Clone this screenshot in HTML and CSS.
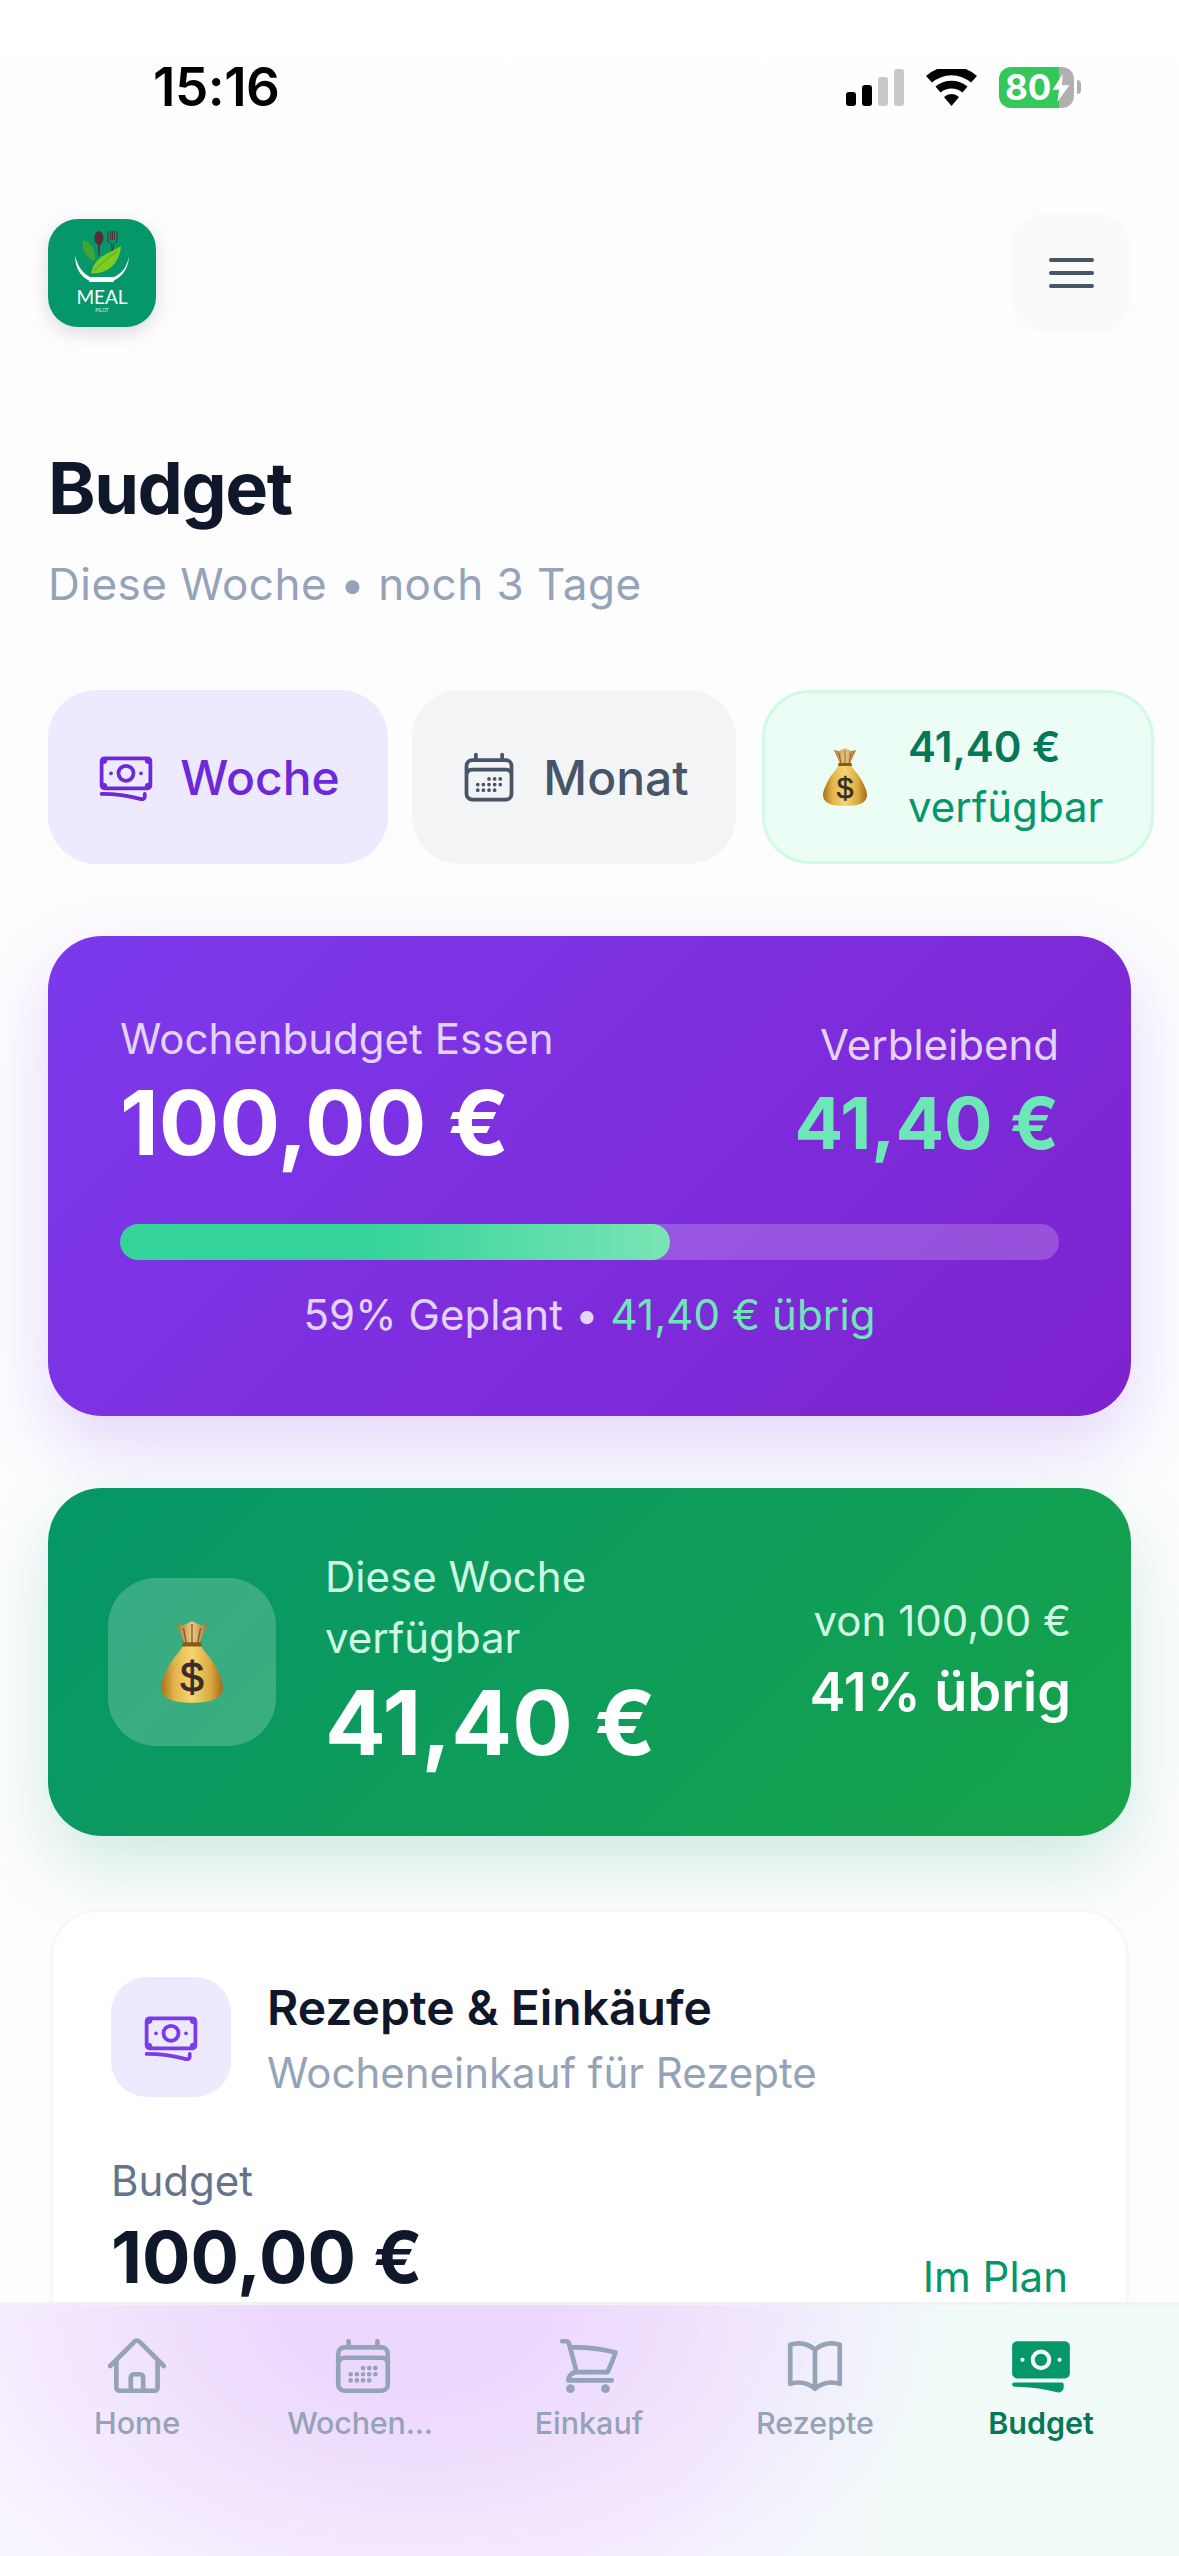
FILE: index.html
```html
<!DOCTYPE html>
<html lang="de">
<head>
    <meta charset="UTF-8">
    <meta name="viewport" content="width=device-width, initial-scale=1.0">
    <title>Budget</title>
    <link rel="stylesheet" href="styles.css">
</head>
<body>
    <svg class="defs" width="0" height="0">
        <defs>
            <linearGradient id="bagGold" x1="0" y1="0" x2="1" y2="0">
                <stop offset="0" stop-color="#a9701b"/>
                <stop offset="0.22" stop-color="#e3b44a"/>
                <stop offset="0.5" stop-color="#f6d673"/>
                <stop offset="0.8" stop-color="#dba840"/>
                <stop offset="1" stop-color="#a36a18"/>
            </linearGradient>
            <linearGradient id="bagTop" x1="0" y1="0" x2="1" y2="0">
                <stop offset="0" stop-color="#a9742a"/>
                <stop offset="0.5" stop-color="#efcb8c"/>
                <stop offset="1" stop-color="#a9742a"/>
            </linearGradient>
            <symbol id="bag" viewBox="0 0 44 58">
                <path d="M11 2l5 1 6-3 6 3 5-1-6 14h-10z" fill="url(#bagTop)"/>
                <path d="M16 5l2 11M22 2v14M28 5l-2 11" stroke="#8d5f22" stroke-width="1" fill="none"/>
                <path d="M16 17c-3 6-9 10-13 20-2 4-3 7-3 10 0 8 8 11 22 11s22-3 22-11c0-3-1-6-3-10-4-10-10-14-13-20z" fill="url(#bagGold)"/>
                <path d="M15.500 15h13l.5 3h-14z" fill="#8a5a1c"/>
                <text x="22" y="50" text-anchor="middle" class="bag-sign">$</text>
            </symbol>
            <symbol id="banknotes" viewBox="0 0 24 24">
                <path fill="none" stroke="currentColor" stroke-linecap="round" stroke-linejoin="round" d="M2.25 18.75a60.07 60.07 0 0 1 15.797 2.101c.727.198 1.453-.342 1.453-1.096V18.75M3.750 4.500v.75A.75.75 0 0 1 3 6h-.75m0 0v-.375c0-.621.504-1.125 1.125-1.125H20.250M2.250 6v9m18-10.500v.75c0 .414.336.75.75.75h.75m-1.500-1.500h.375c.621 0 1.125.504 1.125 1.125v9.750c0 .621-.504 1.125-1.125 1.125h-.375m1.500-1.500H21a.75.75 0 0 0-.75.75v.75m0 0H3.750m0 0h-.375a1.125 1.125 0 0 1-1.125-1.125V15m1.500 1.500v-.75A.75.75 0 0 0 3 15h-.75M15 10.500a3 3 0 1 1-6 0 3 3 0 0 1 6 0Zm3 0h.008v.008H18V10.500Zm-12 0h.008v.008H6V10.500Z"/>
            </symbol>
            <symbol id="calendar" viewBox="0 0 24 24">
                <path fill="none" stroke="currentColor" stroke-linecap="round" stroke-linejoin="round" d="M6.750 3v2.250M17.250 3v2.250M3 18.750V7.500a2.250 2.250 0 0 1 2.250-2.250h13.500A2.250 2.250 0 0 1 21 7.500v11.250m-18 0A2.250 2.250 0 0 0 5.250 21h13.500A2.250 2.250 0 0 0 21 18.750m-18 0v-7.500A2.250 2.250 0 0 1 5.250 9h13.500A2.250 2.250 0 0 1 21 11.250v7.500m-9-6h.008v.008H12v-.008ZM12 15h.008v.008H12V15Zm0 2.250h.008v.008H12v-.008ZM9.750 15h.008v.008H9.750V15Zm0 2.250h.008v.008H9.750v-.008ZM7.500 15h.008v.008H7.500V15Zm0 2.250h.008v.008H7.500v-.008Zm6.750-4.500h.008v.008h-.008v-.008Zm0 2.250h.008v.008h-.008V15Zm0 2.250h.008v.008h-.008v-.008Zm2.250-4.500h.008v.008H16.500v-.008Zm0 2.250h.008v.008H16.500V15Z"/>
            </symbol>
        </defs>
    </svg>

    <div class="status">
        <span class="time">15:16</span>
        <div class="status-icons">
            <div class="signal">
                <span class="bar bar-1"></span>
                <span class="bar bar-2"></span>
                <span class="bar bar-3"></span>
                <span class="bar bar-4"></span>
            </div>
            <svg class="wifi" viewBox="0 0 51 37">
                <path d="M25.500 37l-7.500-9a11 11 0 0 1 15 0z"/>
                <path d="M14.500 23.500l-5-6a25 25 0 0 1 32 0l-5 6a17.500 17.500 0 0 0-22 0z"/>
                <path d="M6 13.500L0 7a38 38 0 0 1 51 0l-6 6.500a30 30 0 0 0-39 0z"/>
            </svg>
            <div class="battery">
                <div class="battery-body">
                    <span class="battery-num">80</span>
                    <svg class="bolt" viewBox="0 0 18 30"><path d="M11 0L0 17h7l-2 13 13-18h-8z"/></svg>
                </div>
                <span class="battery-nub"></span>
            </div>
        </div>
    </div>

    <header class="top">
        <div class="logo">
            <svg viewBox="0 0 108 108" width="108" height="108">
                <path d="M51 12c3 0 4.500 4 4.500 7.500 0 3-2 5.500-3.500 6.500l-.5 11h-1l-.5-11c-1.500-1-3.500-3.500-3.500-6.500C46.500 16 48 12 51 12z" fill="#5a2a35"/>
                <path d="M60 12v9c0 2 2 3.500 3.500 4l.5 7h1l.5-7c1.500-.5 3.500-2 3.500-4v-9M62.700 12v9M66.300 12v9M64.500 12v9" fill="none" stroke="#5a2a35" stroke-width="1"/>
                <path d="M35 21c8 2 13 9 12 21-8-2-14-10-12-21z" fill="#3fa535"/>
                <path d="M73 27c-10 7-26 9-30 27 10 2 28-4 30-27z" fill="#7ccb1d"/>
                <path d="M46 52c6-7 14-13 23-20" stroke="#2f9e3a" stroke-width=".7" fill="none"/>
                <path d="M27 36c0 12 5 21 13 25h27c8-4 14-13 14-25-1 10-6 18-15 22H42c-8-4-13-12-15-22z" fill="#fff"/>
                <path d="M40 60h27l-1.500 3h-24z" fill="#fff"/>
                <text x="54" y="85" text-anchor="middle" class="logo-meal">MEAL</text>
                <text x="54" y="93" text-anchor="middle" class="logo-pilot">PILOT</text>
            </svg>
        </div>
        <button class="menu-btn" type="button">
            <span class="menu-line"></span>
            <span class="menu-line"></span>
            <span class="menu-line"></span>
        </button>
    </header>

    <main class="content">
        <h1 class="title">Budget</h1>
        <p class="subtitle">Diese Woche • noch 3 Tage</p>

        <div class="tabs">
            <div class="tab tab-active">
                <svg class="tab-icon"><use href="#banknotes"/></svg>
                <span>Woche</span>
            </div>
            <div class="tab tab-month">
                <svg class="tab-icon"><use href="#calendar"/></svg>
                <span>Monat</span>
            </div>
            <div class="tab-free">
                <svg class="bag-small"><use href="#bag"/></svg>
                <div>
                    <div class="free-amount">41,40 €</div>
                    <div class="free-label">verfügbar</div>
                </div>
            </div>
        </div>

        <section class="card-purple">
            <div class="purple-head">
                <div>
                    <div class="purple-label">Wochenbudget Essen</div>
                    <div class="purple-amount">100,00 €</div>
                </div>
                <div class="purple-right">
                    <div class="purple-label">Verbleibend</div>
                    <div class="purple-left-amount">41,40 €</div>
                </div>
            </div>
            <div class="progress">
                <div class="progress-fill" style="width: 58.6%"></div>
            </div>
            <p class="purple-caption">59% Geplant • <span class="mint">41,40 € übrig</span></p>
        </section>

        <section class="card-green">
            <div class="green-icon">
                <svg class="bag-large"><use href="#bag"/></svg>
            </div>
            <div>
                <div class="green-label">Diese Woche<br>verfügbar</div>
                <div class="green-amount">41,40 €</div>
            </div>
            <div class="green-right">
                <div class="green-of">von 100,00 €</div>
                <div class="green-percent">41% übrig</div>
            </div>
        </section>

        <section class="card-white">
            <div class="white-head">
                <div class="white-icon">
                    <svg class="tab-icon"><use href="#banknotes"/></svg>
                </div>
                <div class="white-text">
                    <div class="white-title">Rezepte &amp; Einkäufe</div>
                    <div class="white-sub">Wocheneinkauf für Rezepte</div>
                </div>
            </div>
            <div class="white-label">Budget</div>
            <div class="white-row">
                <div class="white-amount">100,00 €</div>
                <div class="white-status">Im Plan</div>
            </div>
        </section>
    </main>

    <nav class="bottom-nav">
        <div class="nav-item">
            <svg class="nav-icon" viewBox="0 0 24 24"><path fill="none" stroke="currentColor" stroke-linecap="round" stroke-linejoin="round" d="m2.250 12 8.954-8.955c.44-.439 1.152-.439 1.591 0L21.750 12M4.500 9.750v10.125c0 .621.504 1.125 1.125 1.125H9.750v-4.875c0-.621.504-1.125 1.125-1.125h2.250c.621 0 1.125.504 1.125 1.125V21h4.125c.621 0 1.125-.504 1.125-1.125V9.750M8.250 21h8.250"/></svg>
            <span>Home</span>
        </div>
        <div class="nav-item">
            <svg class="nav-icon"><use href="#calendar"/></svg>
            <span class="nav-cut">Wochen...</span>
        </div>
        <div class="nav-item">
            <svg class="nav-icon" viewBox="0 0 24 24"><path fill="none" stroke="currentColor" stroke-linecap="round" stroke-linejoin="round" d="M2.250 3h1.386c.51 0 .955.343 1.087.835l.383 1.437M7.500 14.250a3 3 0 0 0-3 3h15.750m-12.750-3h11.218c1.121-2.300 2.100-4.684 2.924-7.138a60.114 60.114 0 0 0-16.536-1.840M7.500 14.250 5.106 5.272M6 20.250a.75.75 0 1 1-1.500 0 .75.75 0 0 1 1.500 0Zm12.750 0a.75.75 0 1 1-1.500 0 .75.75 0 0 1 1.500 0Z"/></svg>
            <span>Einkauf</span>
        </div>
        <div class="nav-item">
            <svg class="nav-icon" viewBox="0 0 24 24"><path fill="none" stroke="currentColor" stroke-linecap="round" stroke-linejoin="round" d="M12 6.042A8.967 8.967 0 0 0 6 3.750c-1.052 0-2.062.18-3 .512v14.250A8.987 8.987 0 0 1 6 18c2.305 0 4.408.867 6 2.292m0-14.250a8.966 8.966 0 0 1 6-2.292c1.052 0 2.062.18 3 .512v14.250A8.987 8.987 0 0 0 18 18a8.967 8.967 0 0 0-6 2.292m0-14.250v14.250"/></svg>
            <span>Rezepte</span>
        </div>
        <div class="nav-item nav-active">
            <svg class="nav-icon" viewBox="0 0 24 24">
                <path fill="currentColor" stroke="none" d="M12 7.500a2.250 2.250 0 1 0 0 4.500 2.250 2.250 0 0 0 0-4.500Z"/>
                <path fill="currentColor" stroke="none" fill-rule="evenodd" d="M1.500 4.875C1.500 3.839 2.340 3 3.375 3h17.250c1.035 0 1.875.84 1.875 1.875v9.750c0 1.036-.84 1.875-1.875 1.875H3.375A1.875 1.875 0 0 1 1.500 14.625v-9.750ZM8.250 9.750a3.750 3.750 0 1 1 7.500 0 3.750 3.750 0 0 1-7.500 0ZM18.750 9a.75.75 0 0 0-.75.75v.008c0 .414.336.75.75.75h.008a.75.75 0 0 0 .75-.75V9.750a.75.75 0 0 0-.75-.75h-.008ZM4.500 9.750A.75.75 0 0 1 5.250 9h.008a.75.75 0 0 1 .75.75v.008a.75.75 0 0 1-.75.75H5.250a.75.75 0 0 1-.75-.75V9.750Z"/>
                <path fill="currentColor" stroke="none" d="M2.250 18a.75.75 0 0 0 0 1.500c5.400 0 10.630.722 15.600 2.075 1.190.324 2.400-.558 2.400-1.820V18.750a.75.75 0 0 0-.75-.75H2.250Z"/>
            </svg>
            <span>Budget</span>
        </div>
    </nav>
</body>
</html>
```

FILE: styles.css
```css
* {
    box-sizing: border-box;
}
html, body {
    margin: 0;
    padding: 0;
}
body {
    position: relative;
    width: 1179px;
    height: 2556px;
    overflow: hidden;
    font-family: Inter, "Noto Sans", sans-serif;
    background-color: #fdfdfe;
    color: #0f172a;
}
.defs {
    position: absolute;
}
.bag-sign {
    font-family: "Liberation Sans", sans-serif;
    font-size: 30px;
    font-weight: 400;
    stroke: #3b2b2a;
    stroke-width: 0.6px;
    fill: #3b2b2a;
}

/* status bar */
.status {
    display: flex;
    justify-content: space-between;
    align-items: center;
    height: 213px;
    padding: 0 98px 39px 153px;
    background: linear-gradient(#fff, #fdfdfe);
}
.time {
    font-size: 53px;
    font-weight: 600;
    color: #000;
    letter-spacing: -0.5px;
}
.status-icons {
    display: flex;
    align-items: center;
    gap: 22px;
}
.signal {
    display: flex;
    align-items: flex-end;
    gap: 6px;
    height: 37px;
}
.bar {
    width: 10px;
    border-radius: 3px;
    background-color: #000;
}
.bar-1 { height: 14px; }
.bar-2 { height: 21px; }
.bar-3 { height: 29px; background-color: #c9c9c9; }
.bar-4 { height: 37px; background-color: #c9c9c9; }
.wifi {
    width: 51px;
    height: 37px;
}
.battery {
    display: flex;
    align-items: center;
    gap: 3px;
}
.battery-body {
    position: relative;
    display: flex;
    align-items: center;
    width: 75px;
    height: 41px;
    padding-left: 6px;
    border-radius: 12px;
    background: linear-gradient(90deg, #34c759 80%, #b0b0b0 80%);
}
.battery-num {
    font-size: 35px;
    font-weight: 700;
    line-height: 41px;
    color: #fff;
}
.bolt {
    position: absolute;
    left: 53px;
    top: 7px;
    width: 18px;
    height: 28px;
    fill: #fff;
}
.battery-nub {
    width: 4px;
    height: 14px;
    border-radius: 0 4px 4px 0;
    background-color: #b0b0b0;
}

/* header */
.top {
    display: flex;
    justify-content: space-between;
    align-items: center;
    height: 120px;
    padding: 0 48px;
}
.logo {
    width: 108px;
    height: 108px;
    border-radius: 30px;
    overflow: hidden;
    background-color: #059669;
    box-shadow: 0 6px 18px rgba(15, 23, 42, 0.14);
}
.logo svg {
    display: block;
}
.logo-meal {
    font-family: Lato, sans-serif;
    font-size: 19px;
    font-weight: 400;
    fill: #fff;
}
.logo-pilot {
    font-family: Lato, sans-serif;
    font-size: 5px;
    fill: #d5f2e4;
}
.menu-btn {
    display: flex;
    flex-direction: column;
    justify-content: center;
    align-items: center;
    gap: 9px;
    width: 120px;
    height: 120px;
    padding: 0;
    border: none;
    border-radius: 36px;
    background-color: #fafafb;
}
.menu-line {
    width: 45px;
    height: 4px;
    border-radius: 2px;
    background-color: #475569;
}

/* page content */
.content {
    padding: 0 48px;
}
.title {
    margin: 113px 0 0;
    font-size: 72px;
    line-height: 84px;
    font-weight: 700;
    letter-spacing: -1.5px;
    color: #0f172a;
}
.subtitle {
    margin: 24px 0 0;
    font-size: 44px;
    line-height: 60px;
    color: #94a3b8;
    letter-spacing: 0.5px;
}

.tabs {
    display: flex;
    gap: 24px;
    width: 1131px;
    margin-top: 76px;
}
.tab {
    display: flex;
    align-items: center;
    justify-content: center;
    gap: 24px;
    height: 174px;
    border-radius: 48px;
    font-size: 48px;
    font-weight: 500;
}
.tab-active {
    width: 340px;
    background-color: #ede9fe;
    color: #6d28d9;
}
.tab-month {
    width: 324px;
    background-color: #f3f4f6;
    color: #475569;
}
.tab-icon {
    width: 60px;
    height: 60px;
    stroke-width: 1.5;
}
.tab-free {
    display: flex;
    align-items: center;
    gap: 41px;
    flex-shrink: 0;
    width: 392px;
    height: 174px;
    margin-left: 2px;
    padding-left: 58px;
    border: 3px solid #d1fae5;
    border-radius: 48px;
    background-color: #ecfdf5;
}
.bag-small {
    width: 44px;
    height: 58px;
}
.free-amount {
    font-size: 42px;
    line-height: 60px;
    font-weight: 600;
    color: #047857;
}
.free-label {
    font-size: 42px;
    line-height: 60px;
    color: #059669;
}

/* purple card */
.card-purple {
    height: 480px;
    margin-top: 72px;
    padding: 73px 72px 0;
    border-radius: 54px;
    background: linear-gradient(135deg, #7c3aed, #7e22ce);
    box-shadow: 0 30px 72px rgba(124, 58, 237, 0.2);
    color: #fff;
}
.purple-head {
    display: flex;
    justify-content: space-between;
    align-items: flex-end;
}
.purple-right {
    text-align: right;
}
.purple-label {
    font-size: 42px;
    line-height: 60px;
    color: #e3d4fc;
}
.purple-right .purple-label {
    line-height: 48px;
}
.purple-amount {
    font-size: 90px;
    line-height: 108px;
    font-weight: 700;
}
.purple-left-amount {
    font-size: 72px;
    line-height: 108px;
    font-weight: 700;
    color: #6ee7b7;
}
.progress {
    height: 36px;
    margin-top: 47px;
    border-radius: 18px;
    overflow: hidden;
    background-color: rgba(255, 255, 255, 0.2);
}
.progress-fill {
    height: 100%;
    border-radius: 18px;
    background: linear-gradient(90deg, #34d399, #34d399 45%, #7ae5b5);
}
.purple-caption {
    margin: 25px 0 0;
    font-size: 42px;
    line-height: 60px;
    letter-spacing: 0.1px;
    text-align: center;
    color: #e3d4fc;
}
.mint {
    color: #6ee7b7;
}

/* green card */
.card-green {
    display: flex;
    align-items: center;
    gap: 49px;
    height: 348px;
    margin-top: 72px;
    padding: 0 60px 0 60px;
    border-radius: 54px;
    background: linear-gradient(135deg, #059669, #16a34a);
    box-shadow: 0 30px 72px rgba(5, 150, 105, 0.18);
    color: #fff;
}
.green-icon {
    display: flex;
    align-items: center;
    justify-content: center;
    flex-shrink: 0;
    width: 168px;
    height: 168px;
    border-radius: 48px;
    background-color: rgba(255, 255, 255, 0.2);
}
.bag-large {
    width: 62px;
    height: 82px;
}
.green-label {
    font-size: 42px;
    line-height: 61px;
    color: #d1fae5;
}
.green-amount {
    font-size: 90px;
    line-height: 110px;
    font-weight: 700;
}
.green-right {
    margin-left: auto;
    padding-bottom: 5px;
    text-align: right;
}
.green-of {
    font-size: 42px;
    line-height: 60px;
    color: #d1fae5;
}
.green-percent {
    margin-top: 5px;
    font-size: 54px;
    line-height: 72px;
    font-weight: 600;
}

/* white card */
.card-white {
    height: 600px;
    margin: 73px 2px 0;
    padding: 65px 58px 0;
    border: 3px solid #f7f7f9;
    border-radius: 48px;
    background-color: #fff;
}
.white-head {
    display: flex;
    align-items: flex-start;
    gap: 36px;
    height: 120px;
}
.white-icon {
    display: flex;
    align-items: center;
    justify-content: center;
    width: 120px;
    height: 120px;
    border-radius: 36px;
    background-color: #ede9fe;
    color: #7c3aed;
}
.white-text {
    margin-top: -2px;
}
.white-title {
    font-size: 48px;
    line-height: 66px;
    font-weight: 600;
}
.white-sub {
    font-size: 42px;
    line-height: 64px;
    color: #94a3b8;
}
.white-label {
    margin-top: 55px;
    font-size: 42px;
    line-height: 57px;
    color: #64748b;
}
.white-row {
    display: flex;
    justify-content: space-between;
    align-items: flex-end;
}
.white-amount {
    font-size: 72px;
    line-height: 96px;
    font-weight: 700;
}
.white-status {
    font-size: 42px;
    line-height: 56px;
    color: #059669;
}

/* bottom navigation, sits over the scrolled content */
.bottom-nav {
    position: absolute;
    left: 0;
    right: 0;
    bottom: 0;
    display: grid;
    grid-template-columns: repeat(5, 226px);
    height: 254px;
    padding: 28px 24px 0;
    border-top: 3px solid #f1f1f6;
    background:
        radial-gradient(ellipse 540px 360px at 35% 0, #ecd8fd, #ecd8fd 25%, rgba(236, 216, 253, 0) 100%),
        linear-gradient(90deg, #f9f6ff, #f8f3fe 55%, #f0fbf8 80%, #f1fbf8);
}
.nav-item {
    display: flex;
    flex-direction: column;
    align-items: center;
    font-size: 30.5px;
    line-height: 44px;
    font-weight: 500;
    color: #94a3b8;
}
.nav-icon {
    display: block;
    width: 66px;
    height: 66px;
    margin-bottom: 2px;
    stroke-width: 1.7;
}
.nav-cut {
    margin-right: 6px;
    letter-spacing: -0.2px;
}
.nav-active {
    font-weight: 600;
    color: #047857;
}
.nav-active .nav-icon {
    color: #059669;
}
```
